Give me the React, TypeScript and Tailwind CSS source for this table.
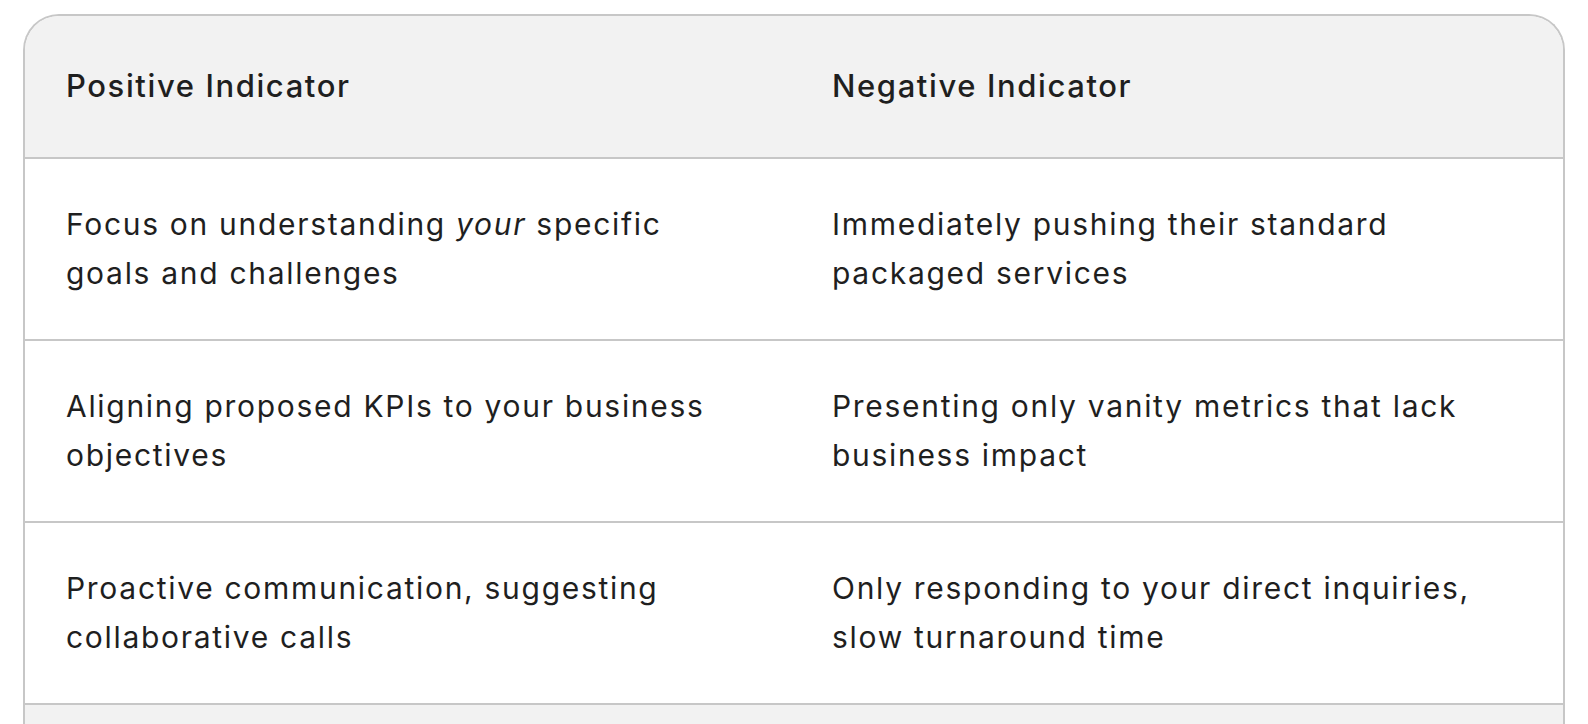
const ROWS = [
  {
    positive: (
      <>
        Focus on understanding <em>your</em> specific goals and challenges
      </>
    ),
    negative: 'Immediately pushing their standard packaged services',
  },
  {
    positive: 'Aligning proposed KPIs to your business objectives',
    negative: 'Presenting only vanity metrics that lack business impact',
  },
  {
    positive: 'Proactive communication, suggesting collaborative calls',
    negative: 'Only responding to your direct inquiries, slow turnaround time',
  },
]

export default function App() {
  return (
    <div
      className="h-screen overflow-hidden bg-white px-[23px] pt-[14px] text-[#1f1f1f]"
      style={{ fontFamily: 'Inter, "Noto Sans", sans-serif' }}
    >
      <div className="overflow-hidden rounded-t-[36px] border-2 border-b-0 border-[#c7c7c7]">
        {/* Header */}
        <div className="grid grid-cols-[766px_1fr] border-b-2 border-[#c7c7c7] bg-[#f2f2f2]">
          <div className="px-[41px] pt-[46px] pb-[47px] text-[31px] font-medium leading-[48px] tracking-[1.6px]">
            Positive Indicator
          </div>
          <div className="px-[41px] pt-[46px] pb-[47px] text-[31px] font-medium leading-[48px] tracking-[1.6px]">
            Negative Indicator
          </div>
        </div>

        {/* Body rows */}
        {ROWS.map((row, i) => (
          <div key={i} className="grid grid-cols-[766px_1fr] border-b-2 border-[#c7c7c7] bg-white">
            <div className="py-[41px] pl-[41px] pr-[66px] text-[30px] leading-[49px] tracking-[1.7px]">
              {row.positive}
            </div>
            <div className="py-[41px] pl-[41px] pr-[66px] text-[30px] leading-[49px] tracking-[1.7px]">
              {row.negative}
            </div>
          </div>
        ))}

        <div className="grid h-[180px] grid-cols-[766px_1fr] bg-[#f2f2f2]" />
      </div>
    </div>
  )
}
